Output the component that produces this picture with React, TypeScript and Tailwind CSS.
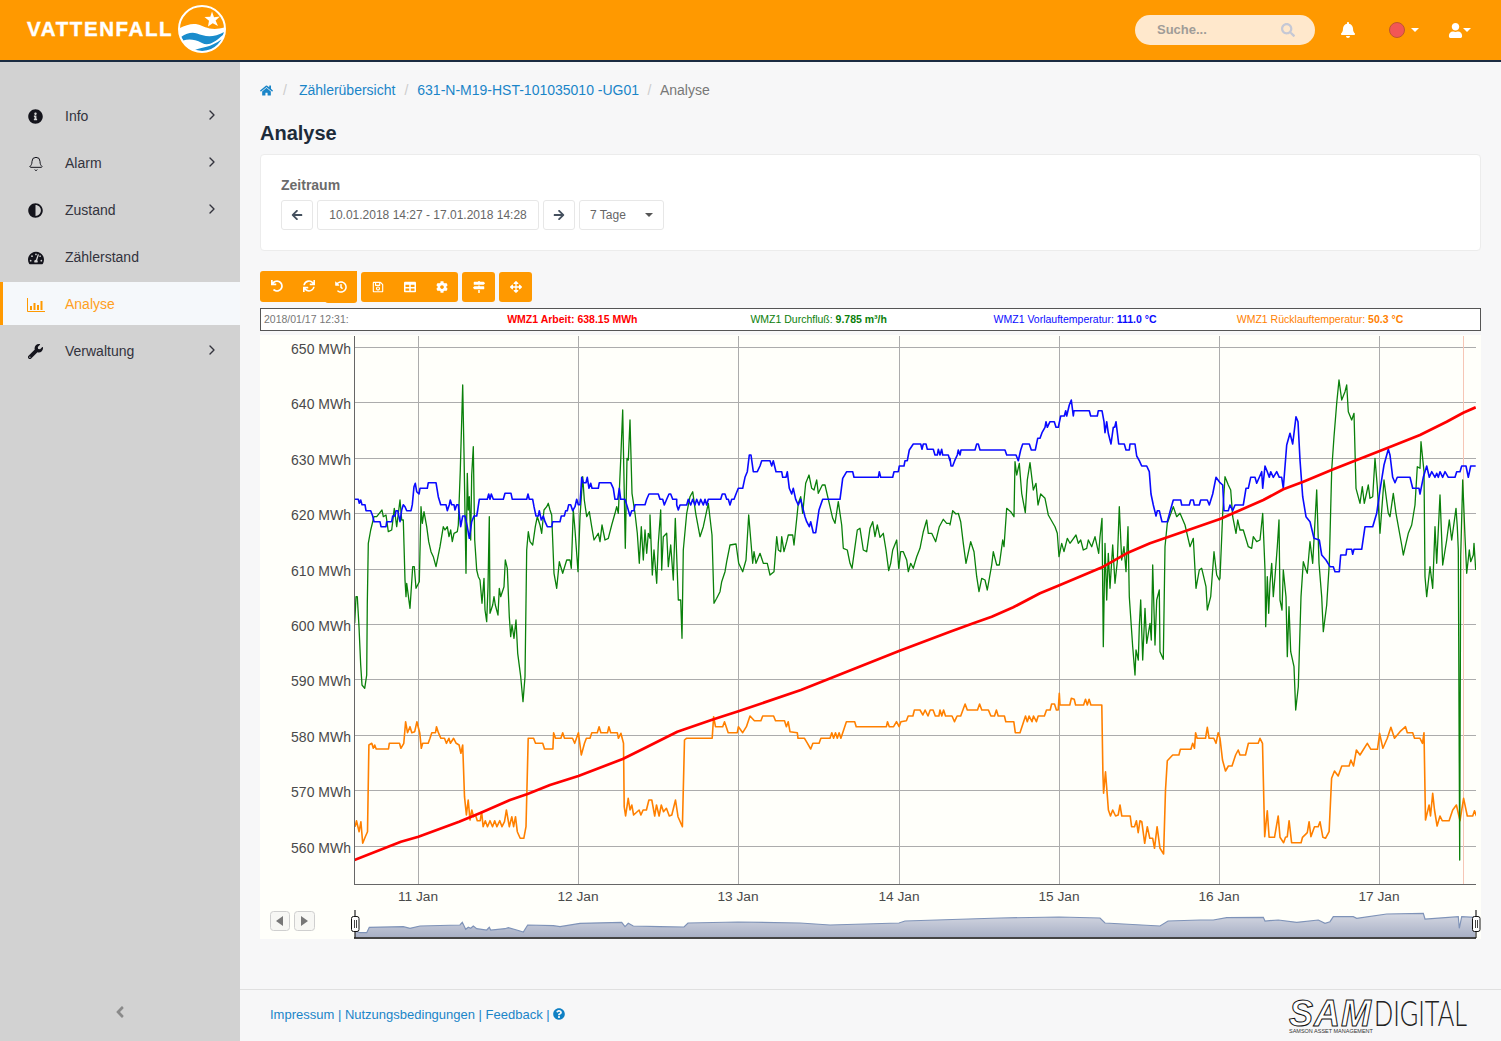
import React from "react";
import {
  FaInfoCircle, FaAdjust, FaTachometerAlt, FaWrench, FaAngleLeft,
  FaBell, FaUser, FaSearch, FaHome, FaArrowLeft, FaArrowRight, FaUndo, FaSync, FaHistory, FaRegSave,
  FaTable, FaCog, FaMapSigns, FaArrowsAlt, FaQuestionCircle,
} from "react-icons/fa";
import { Bell, ChevronRight } from "lucide-react";

const z = (ox: number, oy: number, sx: number, sy: number, a: number[]) => {
  const out: string[] = [];
  for (let i = 0; i < a.length; i += 2) out.push(`${(ox + a[i] / sx).toFixed(1)},${(oy + a[i + 1] / sy).toFixed(1)}`);
  return out.join(" ");
};

const blue = [
  z(350, 370, 3, 3, [14,388,25,388,28,400,32,390,36,404,45,404,48,422,62,422,68,438,72,455,90,455,93,470,108,470,110,455,125,455,128,438,135,438,138,422,143,422,150,455,155,420,160,404,165,410,170,422,183,422,187,404,192,350,196,340,200,365,207,372,210,355,232,355,235,338,258,338,265,380,272,404,288,404,292,422,298,404,301,390,305,404,312,404,315,420,320,404,325,404,332,470,338,438,345,438,352,470,358,505,365,455,372,438,380,438,383,420,388,388,412,388,416,372,420,388,424,372,430,388,460,388,465,370,483,370,487,388,530,388,534,372,538,388,548,388,552,410,558,438,565,438,568,422,574,450,580,438,585,455,592,470,605,470,608,455,630,455,634,438,643,438,647,422,652,422,656,404,662,404,668,422,675,410,680,388,685,404,690,404,695,322,700,338,708,338,712,322,717,355,722,340,726,355,745,355,748,338,782,338,790,355,795,388,803,388,808,355,812,388,825,388,832,410,840,438,845,422,852,422,855,404,885,404,890,388,897,372,900,372]),
  z(650, 400, 3, 3, [0,282,25,282,30,298,38,298,43,315,50,298,57,282,62,282,68,298,80,298,80,315,85,330,90,315,110,315,115,298,122,315,128,298,135,315,140,298,147,315,152,298,160,315,165,298,170,315,175,298,212,298,217,282,225,282,230,298,235,298,240,315,245,298,252,298,258,282,265,265,278,265,285,232,292,215,298,165,303,165,310,215,322,215,330,198,335,182,360,182,365,198,370,182,378,215,395,215,398,232,408,232,412,215,418,265,425,282,430,265,437,298,445,315,452,298,460,330,465,350,470,365,478,380,482,365,490,398,497,398,507,330,512,315,518,298,570,298,578,235,590,215,608,215,612,232,685,232,688,215,692,232,728,232,732,215,745,215,748,198,762,198,765,182,772,182,778,150,790,132,812,132,816,148,820,132,828,132,832,148,850,148,855,165,862,165,865,148,870,165,875,148,878,165,895,165,900,182]),
  z(950, 370, 3, 3, [0,265,3,288,8,288,14,272,22,255,25,240,30,255,33,240,75,240,80,222,85,222,90,240,165,240,170,255,198,255,205,272,212,240,218,222,238,222,244,240,256,240,263,205,270,205,276,188,285,172,288,155,292,172,300,155,313,155,318,172,325,172,332,138,343,138,347,122,350,138,358,105,364,90,370,138,372,122,418,122,422,138,442,138,445,122,456,122,462,155,465,188,470,155,475,190,483,222,490,172,494,172,498,155,506,222,523,222,528,240,538,240,540,222,555,222,560,258,568,272,575,288,590,288,598,305,603,372,610,405,618,438,622,422,628,422,636,455,652,455,660,425,670,390,692,390,695,405,718,405,722,390,730,390,733,405,748,405,752,390,772,390,778,405,788,372,798,322]),
  z(1220, 370, 3, 3, [0,338,8,345,12,422,25,422,30,405,38,422,45,405,70,405,78,355,85,355,92,322,105,322,110,340,125,305,128,355,135,288,142,305,148,322,152,305,160,322,170,305,178,322,185,322,190,355,200,225,210,190,218,222,228,140,234,155,240,270,248,380,258,440,270,455,282,505,298,510,305,555,318,570,330,590,340,590,345,605,358,605,362,555,378,555,380,538,395,538,398,553,402,538,425,538,435,470,458,470,470,430,480,360,492,285,505,238,510,255,518,322,525,338,532,322,570,322,578,355,597,355,600,372,610,322,620,288,628,322,635,305,645,322,650,310,655,322,660,305,668,322,675,305,685,322,705,322,710,305,720,305,725,288,738,288,745,322,752,288,767,288]),
].join(" ");

const green = [
  z(350, 370, 3, 3, [14,760,18,680,22,680,27,770,32,885,36,945,44,955,50,915,52,700,55,520,62,480,72,440,80,440,88,430,96,420,100,440,108,435,115,485,125,480,133,415,140,470,150,390,155,450,160,450,165,630,168,680,170,640,180,715,188,590,193,590,198,655,208,635,213,410,217,460,222,425,230,470,236,515,243,545,250,560,258,590,270,530,280,470,285,480,292,470,297,500,302,480,307,515,312,490,322,485,325,465,331,300,338,45,342,250,348,610,352,310,355,420,358,380,362,510,365,315,370,230,374,510,380,600,385,620,390,630,396,700,402,625,405,720,410,755,414,650,418,440,420,730,428,705,432,680,436,705,444,735,448,655,452,680,462,650,466,570,472,595,478,740,482,800,486,765,492,805,498,750,503,850,512,920,519,995,525,920,530,540,535,485,540,515,548,525,556,470,562,440,570,465,575,490,582,420,590,410,595,400,600,420,605,435,612,610,620,655,628,575,638,610,650,570,660,570,664,595,670,420,675,480,684,605,690,440,698,320,703,390,710,440,718,425,725,470,732,510,745,490,750,515,756,465,765,510,775,505,785,465,795,430,800,410,805,430,812,270,818,120,826,535,831,265,835,270,840,150,846,370,855,430,862,490,868,580,874,470,880,570,885,480,890,550,895,490,900,505]),
  z(650, 400, 3, 3, [0,345,7,525,12,450,20,550,25,430,32,330,35,510,40,410,50,400,55,500,62,435,70,540,76,355,85,600,92,600,96,715,100,450,110,340,120,290,128,275,137,340,150,410,160,380,175,310,186,405,192,610,200,595,210,575,215,545,225,515,230,485,240,435,258,432,266,490,278,515,288,480,296,345,308,490,312,455,318,490,330,460,340,490,352,490,360,525,372,515,380,410,385,450,392,455,395,410,402,455,410,425,415,405,428,405,432,435,445,310,452,290,458,340,467,250,477,225,485,265,492,270,500,240,505,280,517,255,525,255,540,320,548,355,555,370,565,305,575,375,580,445,592,450,600,490,606,505,615,440,622,390,630,385,640,450,650,455,660,385,668,365,675,410,682,375,690,412,700,400,708,450,716,512,722,490,728,450,740,420,746,505,752,455,760,455,770,480,775,515,782,490,790,505,800,470,810,445,820,395,830,360,835,400,845,400,857,425,868,380,880,358,890,370,900,370]),
  z(950, 370, 3, 3, [0,465,8,422,18,432,25,430,32,455,40,520,48,580,62,515,72,545,80,620,87,665,95,625,105,630,112,660,125,585,130,545,140,585,148,585,158,510,162,530,170,415,182,425,192,440,195,275,200,315,208,280,215,370,226,428,232,330,240,278,250,360,258,340,264,405,272,372,285,385,295,435,315,470,322,490,327,560,335,520,342,545,352,505,360,520,378,495,385,520,392,510,400,540,410,535,415,510,425,530,435,500,446,550,450,500,456,445,460,830,465,520,470,690,475,550,480,655,488,525,495,640,502,575,508,410,515,570,522,530,528,605,534,470,538,680,548,830,555,915,558,840,565,870,568,770,572,690,578,870,585,715,590,820,600,760,604,810,608,585,615,825,620,690,628,660,630,845,640,868,645,530,652,460,670,410,680,440,690,430,705,465,720,530,730,505,738,655,748,600,755,595,768,650,772,720,782,680,792,545,800,615,808,630]),
  z(1220, 370, 3, 3, [0,625,8,430,15,320,25,345,32,360,38,440,48,490,53,450,60,480,70,480,85,530,95,535,100,500,110,515,120,510,128,430,135,600,137,770,142,620,146,730,150,640,155,580,160,680,165,620,172,530,177,450,180,690,186,720,190,600,198,680,202,860,207,710,212,845,222,890,227,1020,235,950,243,680,250,575,258,600,262,610,270,515,278,580,290,360,297,580,305,680,310,785,320,705,328,580,335,300,342,200,350,100,357,30,365,90,375,65,380,45,385,125,395,150,402,130,408,355,420,400,427,350,433,400,445,345,450,385,458,380,465,265,472,350,480,490,492,330,505,430,510,440,520,370,528,430,545,525,550,555,565,490,575,465,585,405,592,290,600,295,603,215,612,305,615,620,620,680,630,590,638,655,645,470,650,580,660,375,668,585,680,510,688,450,695,510,708,415,712,470,715,540,719,1470,722,560,728,330,735,500,740,610,748,540,752,575,760,555,762,520,767,600]),
].join(" ");

const orange = [
  z(350, 690, 2.75, 3, [14,410,18,392,25,425,30,395,35,460,42,440,48,425,52,165,60,160,64,175,68,165,72,177,106,177,108,160,136,160,140,175,148,160,153,95,158,128,165,110,170,128,178,125,184,95,192,130,196,175,200,160,215,160,220,145,225,128,235,128,238,110,243,128,250,145,260,145,265,160,272,145,276,160,285,145,292,160,300,165,305,190,310,165,315,320,320,375,325,330,330,390,335,360,340,380,345,375,350,392,358,392,362,365,366,410,372,392,378,410,385,392,392,410,398,392,404,410,412,392,418,410,425,395,430,360,438,410,445,380,450,410,455,380,460,425,468,445,478,445,484,410,490,145,505,145,510,160,530,160,535,177,558,177,560,128,565,145,580,145,585,128,590,145,612,145,618,160,628,128,636,195,645,160,650,145,660,145,665,128,680,128,685,110,690,128,708,128,712,110,717,128,735,128,738,145,745,130,752,160,754,350,758,378,765,325,770,360,775,345,780,375,795,360,800,375,806,360,815,360,822,330,830,330,838,378,843,345,850,378,856,345,862,365,870,355,878,378,885,375,895,330,902,380,914,410,920,150,925,145,996,145,1000,80,1005,110,1025,110,1030,95,1040,128,1065,128,1068,110,1080,128,1090,110,1100,78,1112,92,1130,92,1135,78,1165,78,1170,92,1195,92,1200,110,1205,95,1210,125,1230,128,1232,145,1250,145,1258,160,1267,177,1273,160,1290,160,1295,145,1320,145,1325,128,1330,145,1335,128,1340,145,1345,128,1350,145,1365,95,1388,95,1392,110,1475,110,1478,95,1483,110,1495,110,1503,95,1510,110,1515,95,1530,92,1535,78,1548,78,1552,60,1568,60]),
  z(920, 690, 2.75, 3, [0,60,8,75,14,60,22,78,28,60,36,60,42,78,52,78,55,60,60,78,65,60,70,78,88,78,95,95,102,78,112,78,118,60,124,42,130,60,158,60,164,42,170,60,188,60,195,78,205,78,210,60,215,78,232,78,236,95,258,95,262,128,275,128,285,95,290,78,295,95,300,78,308,95,312,78,320,95,325,78,342,78,348,60,358,60,362,42,370,42,375,60,380,60,383,10,385,45,412,45,416,25,424,28,428,45,450,45,455,28,460,45,465,28,470,45,500,45,503,250,505,310,510,245,518,360,524,378,530,360,538,378,545,375,550,345,555,378,578,378,582,410,590,410,595,392,600,428,605,392,610,395,618,460,625,410,632,445,640,445,645,475,652,410,660,475,670,492,675,300,680,212,695,195,712,195,716,178,745,178,750,160,755,175,758,128,762,145,785,145,790,112,795,145,808,145,814,160,820,128,825,145,832,210,840,243,848,228,858,228,868,195,875,180,880,195,895,195,903,160,930,160,935,145,942,160,948,440,955,362,960,442,975,442,985,378,990,442,1000,458,1005,442,1010,440,1015,392,1022,458,1048,458,1052,442,1065,428,1070,395,1075,440,1085,410,1095,410,1100,395,1108,442,1115,445,1125,425,1132,265,1140,243,1150,258,1160,228,1180,228,1185,210,1192,228,1200,180,1210,195,1220,178,1230,160,1240,178,1258,178,1264,130,1273,175,1285,145,1295,112,1305,145,1320,125,1335,110,1340,128,1355,128,1360,145,1375,145,1382,160,1386,128,1390,390,1400,345,1404,378,1410,310,1415,360,1422,408,1430,378,1436,392,1455,392,1465,360,1475,345,1485,392,1495,325,1505,378,1520,378,1525,362,1530,378]),
].join(" ");

const red = [
  z(350, 690, 2.75, 3, [12,510,140,455,188,440,300,395,360,368,440,330,488,312,550,285,628,258,750,207,800,180,900,125,1000,88,1068,64,1240,0]),
  "899,651",
  z(950, 370, 3, 3, [0,785,70,760,125,740,190,712,270,670,330,645,460,590,530,550,600,520,700,485,810,447]),
  z(1220, 370, 3, 3, [130,390,190,358,250,335,340,298,500,235,600,195,680,155,730,128,767,112]),
].join(" ");

const mini = [
  z(260, 870, 3, 3, [285,182,300,188,320,188,328,172,430,170,450,175,480,168,600,165,607,157,617,178,625,172,632,175,640,168,650,176,680,180,688,172,692,180,735,176,745,173,770,180,790,186,803,165,880,167,900,170,960,160,1085,157,1095,170,1105,160,1120,168,1200,170]),
  "684,927 688,923 738,922 800,923 830,925 899,923 905,921 1000,918 1059,917 1100,918 1105,923 1160,926 1168,921",
  z(1200, 870, 3, 3, [0,150,40,150,80,143,190,142,195,153,235,150,290,157,355,150,375,160,390,155,400,140,460,140,470,145,560,132,670,130,675,147,775,140,778,175,785,140,825,142]),
].join(" ");

const yTicks: [number, string][] = [
  [347, "650 MWh"], [402, "640 MWh"], [458, "630 MWh"], [513, "620 MWh"], [569, "610 MWh"],
  [624, "600 MWh"], [679, "590 MWh"], [735, "580 MWh"], [790, "570 MWh"], [846, "560 MWh"],
];
const xTicks: [number, string][] = [
  [418, "11 Jan"], [578, "12 Jan"], [738, "13 Jan"], [899, "14 Jan"], [1059, "15 Jan"], [1219, "16 Jan"], [1379, "17 Jan"],
];

function Handle({ x }: { x: number }) {
  return (
    <g>
      <line x1={x + 4} x2={x + 4} y1={910} y2={938} stroke="#222" strokeWidth="1.2" />
      <rect x={x + 0.5} y={916.5} width={7.5} height={15} rx={2} fill="#fff" stroke="#111" />
      <line x1={x + 3.5} x2={x + 3.5} y1={920} y2={928} stroke="#444" />
      <line x1={x + 5.5} x2={x + 5.5} y1={920} y2={928} stroke="#444" />
    </g>
  );
}

function Chart() {
  return (
    <svg viewBox="260 335 1221 604" className="block w-[1221px] h-[604px] bg-[#fffffa]">
      <defs>
        <clipPath id="plot"><rect x="354" y="336" width="1122" height="548" /></clipPath>
        <linearGradient id="miniFill" x1="0" y1="0" x2="0" y2="1">
          <stop offset="0" stopColor="#d6d9e3" />
          <stop offset="1" stopColor="#a6aec4" />
        </linearGradient>
      </defs>
      {yTicks.map(([y]) => <line key={y} x1="354" x2="1476" y1={y + 0.5} y2={y + 0.5} stroke="#acacac" />)}
      {xTicks.map(([x]) => <line key={x} x1={x + 0.5} x2={x + 0.5} y1="336" y2="884" stroke="#acacac" />)}
      <line x1="1463.5" x2="1463.5" y1="336" y2="884" stroke="#f6c6b6" />
      <g clipPath="url(#plot)" fill="none" strokeLinejoin="round">
        <polyline points={orange} stroke="#ff8000" strokeWidth="1.6" />
        <polyline points={green} stroke="#0a800a" strokeWidth="1.3" />
        <polyline points={blue} stroke="#0a0aff" strokeWidth="1.6" />
        <polyline points={red} stroke="#ff0000" strokeWidth="2.7" />
      </g>
      <line x1="354.5" x2="354.5" y1="336" y2="884.5" stroke="#666" />
      <line x1="354" x2="1476" y1="884.5" y2="884.5" stroke="#666" />
      <g fill="#4a4a4a" fontFamily="'Liberation Sans',sans-serif">
        {yTicks.map(([y, t]) => <text key={t} x="351" y={y + 7} textAnchor="end" fontSize="14">{t}</text>)}
        {xTicks.map(([x, t]) => <text key={t} x={x} y="901" textAnchor="middle" fontSize="13.7">{t}</text>)}
      </g>
      <rect x="270.5" y="911.5" width="19" height="19" rx="3" fill="#f7f7f4" stroke="#cfcfcf" />
      <polygon points="283,916 283,926 276,921" fill="#777" />
      <rect x="294.5" y="911.5" width="20" height="19" rx="3" fill="#f7f7f4" stroke="#cfcfcf" />
      <polygon points="301,916 301,926 308,921" fill="#777" />
      <polygon points={`355,938 ${mini} 1475,938`} fill="url(#miniFill)" stroke="none" />
      <polyline points={mini} fill="none" stroke="#7f93b8" strokeWidth="1.2" />
      <line x1="354" x2="1476" y1="938" y2="938" stroke="#444" strokeWidth="2" />
      <Handle x={351} />
      <Handle x={1472} />
    </svg>
  );
}

function Logo() {
  return (
    <svg viewBox="0 0 48 48" className="w-12 h-12 ml-[5px] -mt-[2px]">
      <defs><clipPath id="disc"><circle cx="24" cy="24" r="23" /></clipPath></defs>
      <g clipPath="url(#disc)">
        <path d="M0 24 C8 20 14 18 20 19.5 C27 21 32 27 48 22 L48 48 L0 48 Z" fill="#fff" />
        <path d="M3 32 C9 28 14 27 19 28.5 C26 31 34 34 47 26.5 C46 29 45 30 43 31.5 C36 38 30 41 24 38 C16 34 11 34 5 35.5 Z" fill="#1a8ccc" />
        <path d="M17 45 C24 42 32 43 44 34 C43 37 42 39 39 41.5 C33 46 25 47 17 45 Z" fill="#1a8ccc" />
      </g>
      <circle cx="24" cy="24" r="23" fill="none" stroke="#fff" strokeWidth="2" />
      <polygon points="34,6.5 36,12.2 42,11.5 37.6,15.6 40,21 34.7,18.2 30,21.5 31,15.8 26.5,12 32.3,11.8" fill="#fff" />
    </svg>
  );
}

function ChartIcon() {
  return (
    <svg viewBox="0 0 18 14" className="w-[18px] h-[14px] -ml-[1px]">
      <path d="M0.5 0 V13.5 H18" fill="none" stroke="currentColor" />
      <rect x="3" y="8" width="2" height="4" fill="currentColor" />
      <rect x="6.5" y="5" width="2" height="7" fill="currentColor" />
      <rect x="10" y="7" width="2" height="5" fill="currentColor" />
      <rect x="13.5" y="3" width="2" height="9" fill="currentColor" />
    </svg>
  );
}

function Caret({ c }: { c: string }) {
  return <span className={`inline-block w-0 h-0 border-x-[4px] border-x-transparent border-t-[4px] ${c}`} />;
}

const nav: { label: string; icon: React.ReactNode; arrow?: boolean; active?: boolean }[] = [
  { label: "Info", icon: <FaInfoCircle className="text-[15px]" />, arrow: true },
  { label: "Alarm", icon: <Bell size={16} strokeWidth={1.5} />, arrow: true },
  { label: "Zustand", icon: <FaAdjust className="text-[15px]" />, arrow: true },
  { label: "Zählerstand", icon: <FaTachometerAlt className="text-[16px]" /> },
  { label: "Analyse", icon: <ChartIcon />, active: true },
  { label: "Verwaltung", icon: <FaWrench className="text-[15px]" />, arrow: true },
];

function Sidebar() {
  return (
    <aside className="w-[240px] shrink-0 bg-[#d2d2d2] flex flex-col pt-[32px] relative">
      {nav.map((n) => (
        <div
          key={n.label}
          className={`h-[43px] mb-[4px] flex items-center text-[14px] pt-[2px] pr-[20px] ${n.active ? "bg-[#f5f8fb] text-[#ff9f22] border-l-[3px] border-[#ff9900] pl-[25px]" : "text-[#33333d] pl-[28px]"}`}
        >
          <span className={`w-[37px] flex justify-start ${n.active ? "text-[#ff9900]" : "text-[#14141c]"}`}>{n.icon}</span>
          <span className="flex-1">{n.label}</span>
          {n.arrow && <ChevronRight size={16} strokeWidth={2} className="text-[#33333d] -mt-[3px]" />}
        </div>
      ))}
      <div className="mt-auto h-[58px] flex items-center justify-center text-[#8a8a8a]">
        <FaAngleLeft className="text-[18px]" />
      </div>
    </aside>
  );
}

function Btn({ children, w }: { children: React.ReactNode; w: string }) {
  return (
    <div className={`h-[30px] ${w} bg-white border border-[#e7e7e7] rounded-[3px] flex items-center justify-center text-[12px] text-[#666]`}>
      {children}
    </div>
  );
}

function ToolBtn({ children, cls = "h-[30px]" }: { children: React.ReactNode; cls?: string }) {
  return <div className={`w-[32px] ${cls} flex items-center justify-center text-white text-[12px]`}>{children}</div>;
}

export default function App() {
  return (
    <div className="h-[1041px] w-[1501px] overflow-hidden flex flex-col font-['Liberation_Sans',Arial,sans-serif] bg-[#f7f7f8]">
      <header className="h-[62px] shrink-0 bg-[#ff9900] border-b-2 border-[#1b2c42] flex items-center pl-[27px] pr-[30px]">
        <span className="text-white font-bold text-[20.5px] tracking-[1.6px] -mt-[2px] [-webkit-text-stroke:0.4px_white]">VATTENFALL</span>
        <Logo />
        <div className="ml-auto w-[180px] h-[30px] rounded-full bg-[#ffe8cc] flex items-center pl-[22px] pr-[20px] text-[13px] font-bold text-[#a09c98]">
          <span className="flex-1">Suche...</span>
          <FaSearch className="text-[#c5c8d5] text-[14px]" />
        </div>
        <FaBell className="text-white text-[16px] ml-[25px]" />
        <span className="ml-[33px] w-[16px] h-[16px] rounded-full bg-[#f25656] border border-[#c0562e]" />
        <span className="ml-[6px] flex"><Caret c="border-t-white" /></span>
        <FaUser className="text-white text-[15px] ml-[29px]" />
        <span className="flex"><Caret c="border-t-white" /></span>
      </header>
      <div className="flex-1 flex min-h-0">
        <Sidebar />
        <div className="flex-1 flex flex-col min-w-0">
          <main className="flex-1 px-[20px] pt-[19px]">
            <nav className="h-[18px] flex items-center text-[14px] text-[#1a85c8]">
              <FaHome className="text-[13px]" />
              <span className="text-[#ccc] mr-[12px] ml-[10px]">/</span>
              <span>Zählerübersicht</span>
              <span className="text-[#ccc] mx-[9px]">/</span>
              <span>631-N-M19-HST-101035010 -UG01</span>
              <span className="text-[#ccc] mx-[8.5px]">/</span>
              <span className="text-[#777]">Analyse</span>
            </nav>
            <h1 className="mt-[22px] h-[24px] leading-[24px] text-[20px] font-bold text-[#1d2b3a]">Analyse</h1>
            <section className="mt-[9px] h-[97px] bg-white border border-[#ececec] rounded-[4px] pl-[20px] pt-[22px]">
              <div className="text-[14px] leading-[16px] font-bold text-[#6b6b6b]">Zeitraum</div>
              <div className="mt-[7px] flex gap-[4px]">
                <Btn w="w-[32px]"><FaArrowLeft className="text-[#44505e] text-[12px]" /></Btn>
                <Btn w="w-[222px]">10.01.2018 14:27 - 17.01.2018 14:28</Btn>
                <Btn w="w-[32px]"><FaArrowRight className="text-[#44505e] text-[12px]" /></Btn>
                <div className="h-[30px] w-[85px] bg-white border border-[#e7e7e7] rounded-[3px] flex items-center justify-between pl-[10px] pr-[10px] text-[12px] text-[#666]">
                  <span>7 Tage</span>
                  <Caret c="border-t-[#555]" />
                </div>
              </div>
            </section>
            <div className="mt-[20px] flex items-start gap-[4px] h-[33px]">
              <div className="flex bg-[#ff9900] rounded-[3px] h-[31px] w-[97px] items-start pl-[1px] relative">
                <ToolBtn><FaUndo /></ToolBtn>
                <ToolBtn><FaSync /></ToolBtn>
                <ToolBtn cls="h-[32px] bg-[#ff9900] rounded-b-[3px]"><FaHistory /></ToolBtn>
              </div>
              <div className="flex bg-[#ff9900] rounded-[3px] h-[30px] w-[97px] mt-[1px] pl-[1px]">
                <ToolBtn><FaRegSave /></ToolBtn>
                <ToolBtn><FaTable /></ToolBtn>
                <ToolBtn><FaCog /></ToolBtn>
              </div>
              <div className="flex justify-center bg-[#ff9900] rounded-[3px] h-[30px] w-[33px] mt-[1px]">
                <ToolBtn><FaMapSigns /></ToolBtn>
              </div>
              <div className="flex justify-center bg-[#ff9900] rounded-[3px] h-[30px] w-[33px] mt-[1px]">
                <ToolBtn><FaArrowsAlt /></ToolBtn>
              </div>
            </div>
            <div className="mt-[4px] h-[23px] bg-white border border-[#555] grid grid-cols-5 items-center pl-[3px] text-[10.5px] whitespace-nowrap">
              <span className="text-[#777]">2018/01/17 12:31:</span>
              <span className="text-[#ff0000] font-bold">WMZ1 Arbeit: 638.15 MWh</span>
              <span className="text-[#0a800a]">WMZ1 Durchfluß: <b>9.785 m³/h</b></span>
              <span className="text-[#0a0aff]">WMZ1 Vorlauftemperatur: <b>111.0 °C</b></span>
              <span className="text-[#ff8000]">WMZ1 Rücklauftemperatur: <b>50.3 °C</b></span>
            </div>
            <div className="mt-[4px]"><Chart /></div>
          </main>
          <footer className="h-[52px] shrink-0 border-t border-[#e0e0e0] flex items-center pl-[30px] pr-[33px] text-[13px] text-[#1a85c8]">
            <span className="-mt-[1px]">Impressum | Nutzungsbedingungen | Feedback |</span>
            <FaQuestionCircle className="ml-[3px] -mt-[3px] text-[12px] text-[#0f80c4]" />
            <div className="ml-auto w-[179px] flex flex-col leading-none text-black pt-[2px]">
              <div className="flex items-baseline h-[26px]">
                <span className="w-[85px] text-[36px] leading-[26px] font-bold italic text-white tracking-[1px] [-webkit-text-stroke:1px_#111]">SAM</span>
                <span className="w-[94px] inline-block origin-left scale-x-[0.72] text-[35px] leading-[26px] font-['Lato',sans-serif] font-light text-[#222]">DIGITAL</span>
              </div>
              <span className="text-[5.5px] leading-[6px] mt-[3px] text-[#333]">SAMSON ASSET MANAGEMENT</span>
            </div>
          </footer>
        </div>
      </div>
    </div>
  );
}
